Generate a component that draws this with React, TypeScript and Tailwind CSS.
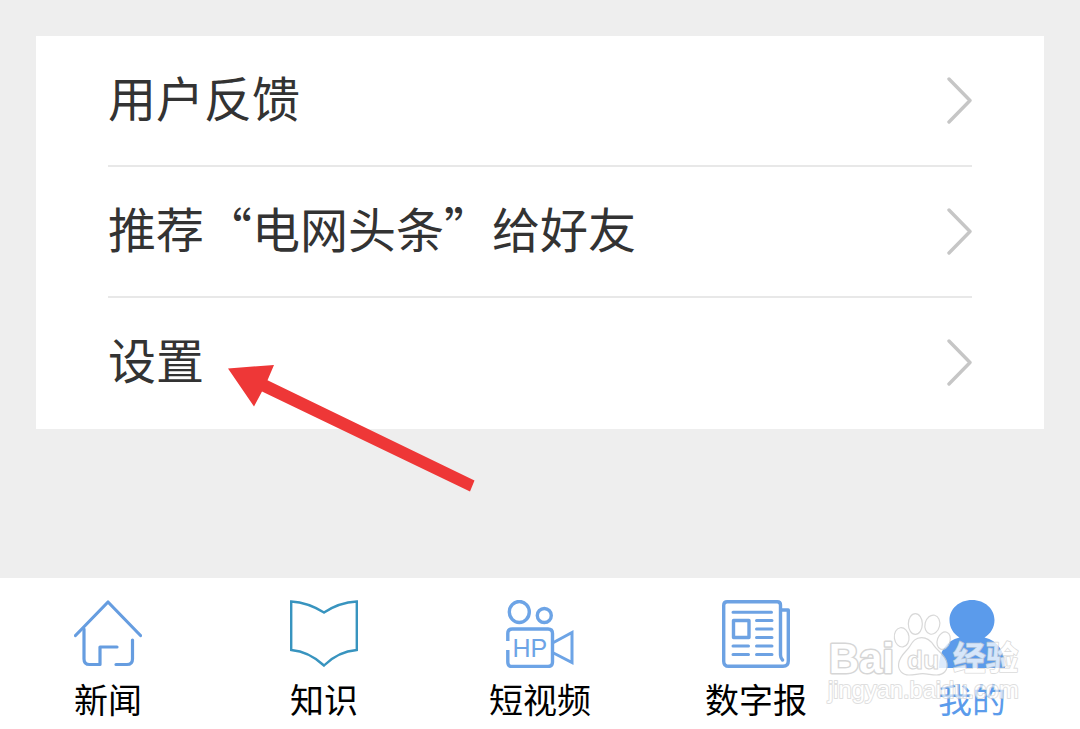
import type { ReactNode } from "react";

const menuItems = ["用户反馈", "推荐“电网头条”给好友", "设置"];

function ChevronIcon() {
  return (
    <svg className="w-7 h-12 shrink-0" viewBox="0 0 28 48" fill="none" stroke="#c6c6c6" strokeWidth="3.4" strokeLinecap="round" strokeLinejoin="round" aria-hidden="true">
      <path d="M5 2 26 23.500 5 45" />
    </svg>
  );
}

function HomeIcon() {
  return (
    <svg className="size-[68px]" viewBox="0 0 68 68" fill="none" stroke="#669de0" strokeWidth="3.2" strokeLinecap="round" strokeLinejoin="round" aria-hidden="true">
      <path d="M1.5 35.5 34 2l32.500 33.500" />
      <path d="M10 29v30q0 5.500 5.500 5.500H26V47h17" />
      <path d="M58.500 40v19q0 5.500-5.500 5.500H42" />
    </svg>
  );
}

function BookIcon() {
  return (
    <svg className="size-[68px]" viewBox="0 0 68 68" fill="none" stroke="#3894bf" strokeWidth="2.4" strokeLinejoin="miter" aria-hidden="true">
      <path d="M1.200 1.500Q18 2.500 34 12.500 49 2.500 66.800 1.500V50Q48 51.500 34 65.500 19 51.500 1.200 50Z" />
    </svg>
  );
}

function VideoIcon() {
  return (
    <svg className="size-[68px]" viewBox="0 0 68 68" fill="none" stroke="#6da4e6" strokeWidth="3.4" aria-hidden="true">
      <ellipse cx="13.300" cy="12" rx="10" ry="10.500" />
      <circle cx="38.300" cy="15.500" r="7" />
      <path d="M1.800 41V33.500q0-4.500 4.500-4.500H42q4.500 0 4.500 4.500V62q0 4.500-4.500 4.500H6.300q-4.500 0-4.500-4.500V50" />
      <path d="M47.500 42.500 66 32.500v30L47.500 53" strokeWidth="3" />
      <text x="6.500" y="57" fontFamily="Liberation Sans, sans-serif" fontSize="25" fill="#6da4e6" stroke="none">HP</text>
    </svg>
  );
}

function NewspaperIcon() {
  return (
    <svg className="size-[68px]" viewBox="0 0 68 68" fill="none" stroke="#6da2e3" strokeWidth="3.400" strokeLinecap="round" strokeLinejoin="round" aria-hidden="true">
      <path d="M60.500 60Q58.500 58 58.500 55V5q0-3.300-3.300-3.300H5.200q-3.500 0-3.500 3.500v56q0 5.100 5.100 5.100H61q5.300 0 5.300-5.300V10H60" />
      <path d="M11 12.200h38.500M34.500 20.500h15.500M34.500 29h15.500M34.500 37.500h15.500M34.500 46h15.500M34.500 54.500h15.500M11 46h15.500M11 54.500h15.500" strokeWidth="3" />
      <path d="M11.500 20.500h15.500v17H11.500Z" />
    </svg>
  );
}

function UserIcon() {
  return (
    <svg className="size-[68px]" viewBox="0 0 68 68" fill="#5b9beb" aria-hidden="true">
      <path d="M34 0c13 0 22.500 9 22.500 20 0 7.500-4 14-10 17.500C60 41 67 51 67 68H1c0-17 7-27 20.500-30.500-6-3.500-10-10-10-17.500C11.500 9 21 0 34 0Z" />
    </svg>
  );
}

function Watermark() {
  return (
    <svg className="absolute right-10 top-3 w-[220px] h-[139px] pointer-events-none" viewBox="0 0 660 417" fill="#ffffff" stroke="#cfcfcf" strokeWidth="3.500" strokeLinejoin="round" aria-hidden="true">
      <g className="[paint-order:stroke]">
        <text x="26" y="249" fontFamily="Liberation Sans, sans-serif" fontWeight="700" fontSize="126" strokeWidth="9" opacity="0.85">Bai</text>
        <text x="399" y="240" fontFamily="'Noto Sans CJK SC', sans-serif" fontWeight="700" fontSize="98" strokeWidth="5" opacity="0.75">经验</text>
        <text x="24" y="325" fontFamily="Liberation Sans, sans-serif" fontSize="71" strokeWidth="6" opacity="0.65">jingyan.baidu.com</text>
      </g>
      <g opacity="0.8">
        <ellipse cx="245" cy="142" rx="22" ry="29" transform="rotate(-8 245 142)" />
        <ellipse cx="286" cy="102" rx="21" ry="31" />
        <ellipse cx="337" cy="104" rx="22" ry="29" transform="rotate(14 337 104)" />
        <ellipse cx="371" cy="152" rx="19" ry="27" transform="rotate(20 371 152)" />
        <path d="M305 143c-19 0-27 11-35 25-9 16-31 27-34 53-3 20 12 34 31 34 17 0 26-4 41-4s25 4 42 4c20 0 35-14 31-36-5-25-28-35-39-52-9-14-18-24-37-24Z" />
      </g>
      <text x="260" y="236" fontFamily="Liberation Sans, sans-serif" fontWeight="700" fontSize="80" strokeWidth="3" opacity="0.85">du</text>
    </svg>
  );
}

function PointerArrow() {
  return (
    <svg className="absolute left-[120px] top-16 w-[248px] h-32 pointer-events-none overflow-visible" viewBox="0 0 248 128" fill="#ee3737" aria-hidden="true">
      <path d="M0 6.500 46 3 39.500 18.300 246.500 118.500 242 129.500 34 29.500 26 44.500Z" />
    </svg>
  );
}

const tabs: { label: string; icon: ReactNode; active?: boolean }[] = [
  { label: "新闻", icon: <HomeIcon /> },
  { label: "知识", icon: <BookIcon /> },
  { label: "短视频", icon: <VideoIcon /> },
  { label: "数字报", icon: <NewspaperIcon /> },
  { label: "我的", icon: <UserIcon />, active: true },
];

export default function App() {
  return (
    <div className="min-h-screen flex flex-col bg-[#eeeeee] font-['Noto_Sans_CJK_SC',sans-serif]" lang="zh-CN">
      <main className="flex-1 p-9">
        <ul className="bg-white px-[72px]">
          {menuItems.map((item, index) => (
            <li key={item} className="relative">
              <button
                type="button"
                className={`w-full flex items-center justify-between py-7 border-b-2 text-left text-[48px] leading-[65px] text-[#333333] ${
                  index < menuItems.length - 1 ? "border-[#e8e8e8]" : "border-transparent"
                }`}
              >
                <span className="pb-2">{item}</span>
                <ChevronIcon />
              </button>
              {item === "设置" && <PointerArrow />}
            </li>
          ))}
        </ul>
      </main>

      <nav className="relative grid grid-cols-5 bg-white pt-[22px] pb-1.5">
        {tabs.map((tab) => (
          <button
            key={tab.label}
            type="button"
            className={`flex flex-col items-center gap-1.5 text-[34px] leading-[49px] ${tab.active ? "text-[#5b9beb]" : "text-black"}`}
          >
            {tab.icon}
            <span>{tab.label}</span>
          </button>
        ))}
        <Watermark />
      </nav>
    </div>
  );
}
